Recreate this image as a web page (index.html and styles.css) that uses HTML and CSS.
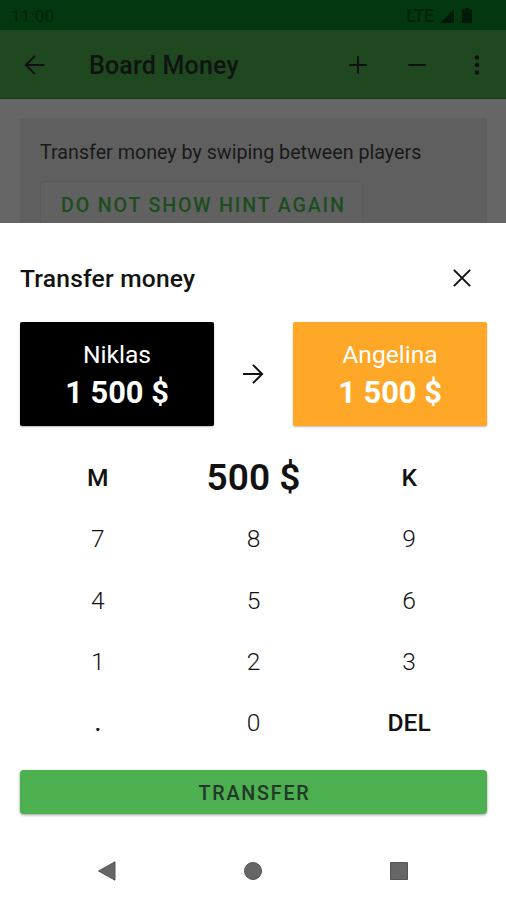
FILE: index.html
```
<!DOCTYPE html>
<html lang="en">
<head>
<meta charset="utf-8">
<title>Board Money</title>
<link rel="stylesheet" href="styles.css">
</head>
<body>
<div class="screen">
  <div class="backdrop">
    <div class="status">
      <span class="t time">11:00</span>
      <span class="t lte">LTE</span>
      <svg class="signal" width="14" height="14" viewBox="0 0 14 14"><path d="M14 0v14H0z"/></svg>
      <svg class="battery" width="10" height="15" viewBox="0 0 10 15"><path d="M3 0h4v1.500h2q1 0 1 1V14q0 1-1 1H1q-1 0-1-1V2.500q0-1 1-1h2z"/></svg>
    </div>
    <header class="toolbar">
      <svg class="icon back" viewBox="0 0 24 24"><path d="M19.500 12H5.500M12 4.700L4.700 12l7.300 7.300"/></svg>
      <h1 class="t app-title">Board Money</h1>
      <svg class="icon plus" viewBox="0 0 24 24"><path d="M12 5v14M5 12h14"/></svg>
      <svg class="icon minus" viewBox="0 0 24 24"><path d="M5 12h14"/></svg>
      <svg class="icon more" viewBox="0 0 24 24"><circle cx="12" cy="6" r="1.800"/><circle cx="12" cy="12" r="1.800"/><circle cx="12" cy="18" r="1.800"/></svg>
    </header>
    <div class="hint">
      <p><span class="t hint-text">Transfer money by swiping between players</span></p>
      <div class="hint-button"><span class="t hint-label">DO NOT SHOW HINT AGAIN</span></div>
    </div>
  </div>
  <main class="sheet">
    <div class="sheet-head">
      <h2 class="t sheet-title">Transfer money</h2>
      <svg class="icon close" viewBox="0 0 24 24"><path d="M5.500 5.500l13 13M18.500 5.500l-13 13"/></svg>
    </div>
    <div class="players">
      <div class="player from"><span class="t name">Niklas</span><span class="t amount">1 500 $</span></div>
      <svg class="icon arrow" viewBox="0 0 24 24"><path d="M4 12h15M12 4.700l7.300 7.300-7.300 7.300"/></svg>
      <div class="player to"><span class="t name">Angelina</span><span class="t amount">1 500 $</span></div>
    </div>
    <div class="keypad">
      <span class="fn"><b class="t">M</b></span><span class="value"><b class="t total">500 $</b></span><span class="fn"><b class="t">K</b></span>
      <span>7</span><span>8</span><span>9</span>
      <span>4</span><span>5</span><span>6</span>
      <span>1</span><span>2</span><span>3</span>
      <span class="fn"><b class="t">.</b></span><span>0</span><span class="fn"><b class="t">DEL</b></span>
    </div>
    <div class="submit"><span class="t submit-label">TRANSFER</span></div>
    <nav class="nav">
      <svg width="20" height="20" viewBox="0 0 20 20"><path d="M1.500 10L18 .8v18.400z"/></svg>
      <svg width="20" height="20" viewBox="0 0 20 20"><circle cx="10" cy="10" r="8.500"/></svg>
      <svg width="20" height="20" viewBox="0 0 20 20"><path d="M1.500 1.500h17v17h-17z"/></svg>
    </nav>
  </main>
</div>
</body>
</html>
```
FILE: styles.css
```
* { box-sizing: border-box; }
body { margin: 0; font-family: Roboto, sans-serif; color: #121212; }
h1, h2, p { margin: 0; }
.t { white-space: nowrap; }
.screen { width: 506px; height: 900px; display: flex; flex-direction: column; overflow: hidden; background: #fff; }
.backdrop { height: 223px; flex: none; background: #666; overflow: hidden; }
.status { height: 30px; background: #03370f; color: #02230a; display: flex; align-items: center; padding: 1px 34px 0 11px; font-size: 17px; }
.status svg { fill: #021a07; flex: none; }
.time { letter-spacing: .2px; }
.lte { margin-left: auto; font-size: 17.500px; font-weight: 500; }
.signal { margin-left: 6px; }
.battery { margin-left: 8px; }
.toolbar { height: 69px; background: #1f4720; border-bottom: 1px solid #123d14; display: flex; align-items: center; padding: 1px 14px 0 20px; }
.icon { width: 30px; height: 30px; flex: none; fill: none; stroke: #111; stroke-width: 1.600; }
.app-title { margin: 2px auto 0 39px; font-size: 25px; font-weight: 500; line-height: 30px; letter-spacing: .2px; color: #101410; }
.plus { margin-right: 29px; }
.minus { margin-right: 30px; }
.more { fill: #111; stroke: none; }
.hint { margin: 19px 19px 0 20px; height: 120px; padding: 23px 20px; background: #5f5f5f; }
.hint-text { font-size: 19.700px; line-height: 24px; color: #191919; }
.hint-button { margin-top: 16px; width: 323px; height: 45px; border: 1px solid #5a5a5a; border-radius: 5px; padding: 12px 20px; line-height: 24px; background: #616161; }
.hint-label { font-size: 19.700px; font-weight: 500; letter-spacing: 1.800px; color: #1c4d1e; }
.sheet { flex: 1; padding: 0 19px 0 20px; display: flex; flex-direction: column; }
.sheet-head { height: 98px; padding: 11px 10px 0 0; display: flex; align-items: center; justify-content: space-between; }
.sheet-title { font-size: 24.600px; font-weight: 500; line-height: 30px; letter-spacing: .2px; margin-top: 2px; }
.players { display: flex; align-items: center; justify-content: space-between; height: 106px; }
.player { width: 194px; height: 104px; border-radius: 2px; color: #fff; display: flex; flex-direction: column; align-items: center; padding-top: 17px; box-shadow: 0 1px 2px #0004; }
.from { background: #000; }
.to { background: #ffa726; }
.name { font-size: 24.600px; line-height: 31px; }
.amount { font-size: 30.800px; font-weight: 700; line-height: 45px; }
.arrow { margin-right: 1px; }
.keypad { display: grid; grid-template-columns: repeat(3, 1fr); grid-template-rows: repeat(5, 61.300px); padding-top: 20px; height: 343px; }
.keypad > span { display: flex; align-items: center; justify-content: center; font-size: 24.600px; font-weight: 300; color: #121212; }
.keypad b { font-weight: 500; color: #121212; }
.keypad .total { font-size: 37px; font-weight: 600; }
.submit { height: 44px; border-radius: 4px; background: #4caf50; box-shadow: 0 1px 3px #0006; display: flex; align-items: center; justify-content: center; }
.submit-label { font-size: 19.700px; font-weight: 500; letter-spacing: 1.800px; color: #23382a; padding: 2px 0 0 2px; }
.nav { display: flex; justify-content: center; gap: 126px; padding: 47px 1px 0 0; }
.nav svg { fill: #666; stroke: #555; stroke-width: 1; }
```
